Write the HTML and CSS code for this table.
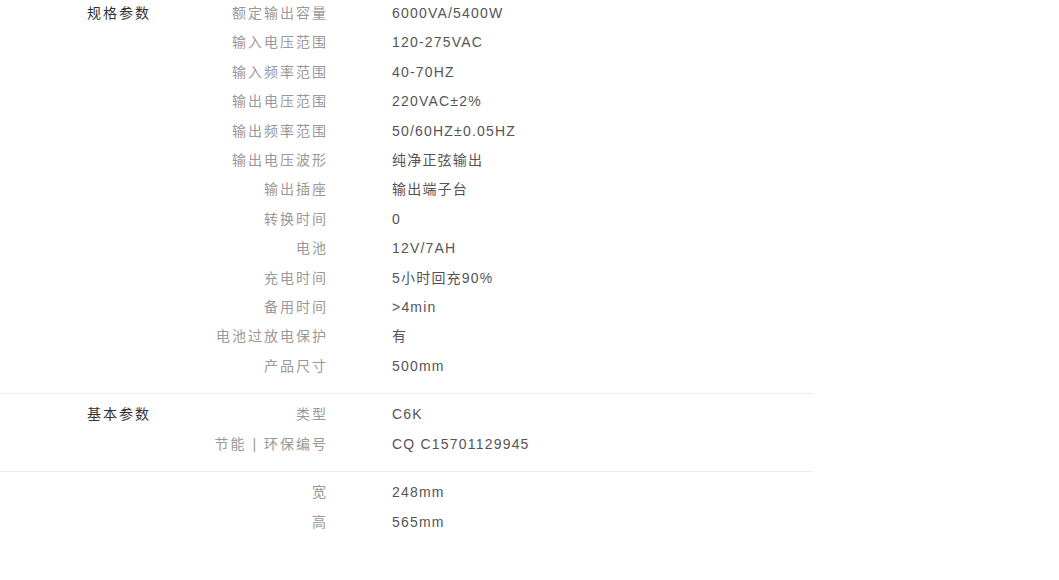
FILE: index.html
```html
<!DOCTYPE html>
<html lang="zh-CN">
<head>
    <meta charset="UTF-8">
    <title>规格参数</title>
    <link rel="stylesheet" href="styles.css">
</head>
<body>

<div class="params">
    <div class="section first">
        <div class="section-title">规格参数</div>
        <dl class="rows">
            <dt>额定输出容量</dt><dd>6000VA/5400W</dd>
            <dt>输入电压范围</dt><dd>120-275VAC</dd>
            <dt>输入频率范围</dt><dd>40-70HZ</dd>
            <dt>输出电压范围</dt><dd>220VAC±2%</dd>
            <dt>输出频率范围</dt><dd>50/60HZ±0.05HZ</dd>
            <dt>输出电压波形</dt><dd>纯净正弦输出</dd>
            <dt>输出插座</dt><dd>输出端子台</dd>
            <dt>转换时间</dt><dd>0</dd>
            <dt>电池</dt><dd>12V/7AH</dd>
            <dt>充电时间</dt><dd>5小时回充90%</dd>
            <dt>备用时间</dt><dd>&gt;4min</dd>
            <dt>电池过放电保护</dt><dd>有</dd>
            <dt>产品尺寸</dt><dd>500mm</dd>
        </dl>
    </div>

    <div class="section">
        <div class="section-title">基本参数</div>
        <dl class="rows">
            <dt>类型</dt><dd>C6K</dd>
            <dt>节能 | 环保编号</dt><dd>CQ C15701129945</dd>
        </dl>
    </div>

    <div class="section">
        <div class="section-title"></div>
        <dl class="rows">
            <dt>宽</dt><dd>248mm</dd>
            <dt>高</dt><dd>565mm</dd>
        </dl>
    </div>
</div>

</body>
</html>
```

FILE: styles.css
```css
body {
    margin: 0;
    background-color: #ffffff;
    font-family: "Liberation Sans", Arial, "Noto Sans CJK SC", sans-serif;
    font-size: 14px;
    color: #555555;
}
.params {
    width: 813px;
    margin-top: -1px;
}
.section {
    display: flex;
    padding: 6px 0 12px 87px;
    border-top: 1px solid #ececec;
    line-height: 29.4px;
}
.section.first {
    padding-top: 0;
    border-top: none;
}
.section-title {
    width: 100px;
    color: #333333;
    letter-spacing: 2px;
}
.rows {
    display: grid;
    grid-template-columns: 141px 1fr;
    column-gap: 64px;
    margin: 0;
}
.rows dt {
    text-align: right;
    color: #999999;
    letter-spacing: 2px;
}
.rows dd {
    margin: 0;
    letter-spacing: 1.2px;
}
```
